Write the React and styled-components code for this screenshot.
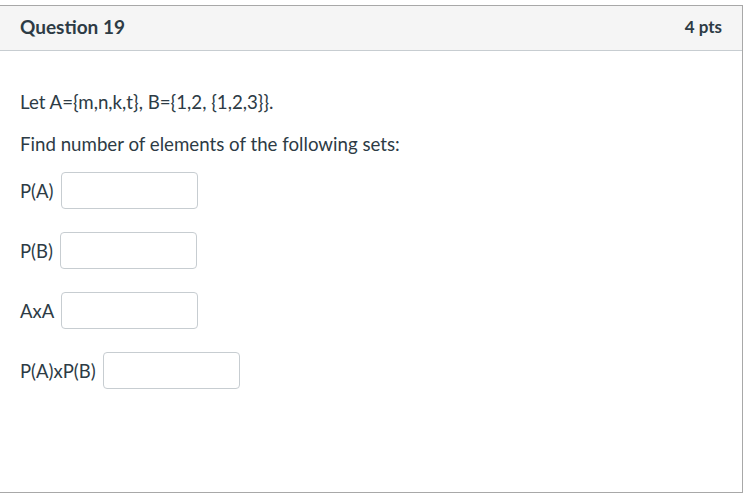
import React from "react";
import styled, { createGlobalStyle } from "styled-components";

const GlobalStyle = createGlobalStyle`
  body {
    margin: 0;
    background: #fff;
    font-family: Lato, "Open Sans", sans-serif;
    color: #2d3b45;
  }
`;

const Page = styled.div`
  padding-top: 5px;
  width: 748px;
  height: 504px;
  overflow: hidden;
`;

const Card = styled.div`
  width: 744px;
  margin-left: -1px;
  height: 488px;
  box-sizing: border-box;
  border: 1px solid #a8a8a8;
  background: #fff;
`;

const Header = styled.div`
  height: 45px;
  box-sizing: border-box;
  display: flex;
  align-items: center;
  justify-content: space-between;
  padding: 0 20px 3px 20px;
  background: #f5f5f5;
  border-bottom: 1px solid #c7cdd1;
`;

const Title = styled.h2`
  margin: 0;
  font-size: 19px;
  font-weight: 700;
  color: #2d3b45;
`;

const Points = styled.span`
  font-size: 17px;
  font-weight: 700;
  color: #2d3b45;
`;

const Body = styled.div`
  padding: 39px 20px 0;
`;

const Text = styled.p`
  margin: 0 0 ${(p) => p.$mb ?? 18}px;
  font-size: 18.7px;
  line-height: 24px;
`;

const Row = styled.div`
  display: flex;
  align-items: center;
  gap: 7px;
  margin-top: ${(p) => p.$top ?? 23}px;
  font-size: 18.5px;
`;

const Answer = styled.input`
  width: 137px;
  height: 37px;
  box-sizing: border-box;
  border: 1px solid #c7cdd1;
  border-radius: 4px;
  background: #fff;
  padding: 0 8px;
  font: inherit;
`;

const rows = ["P(A)", "P(B)", "AxA", "P(A)xP(B)"];

export default function App() {
  return (
    <Page>
      <GlobalStyle />
      <Card>
        <Header>
          <Title>Question 19</Title>
          <Points>4 pts</Points>
        </Header>
        <Body>
          <Text>Let A={"{"}m,n,k,t{"}"}, B={"{"}1,2, {"{"}1,2,3{"}}"}.</Text>
          <Text $mb={16}>Find number of elements of the following sets:</Text>
          {rows.map((label, i) => (
            <Row key={label} $top={i === 0 ? 0 : 23}>
              <span>{label}</span>
              <Answer type="text" />
            </Row>
          ))}
        </Body>
      </Card>
    </Page>
  );
}
